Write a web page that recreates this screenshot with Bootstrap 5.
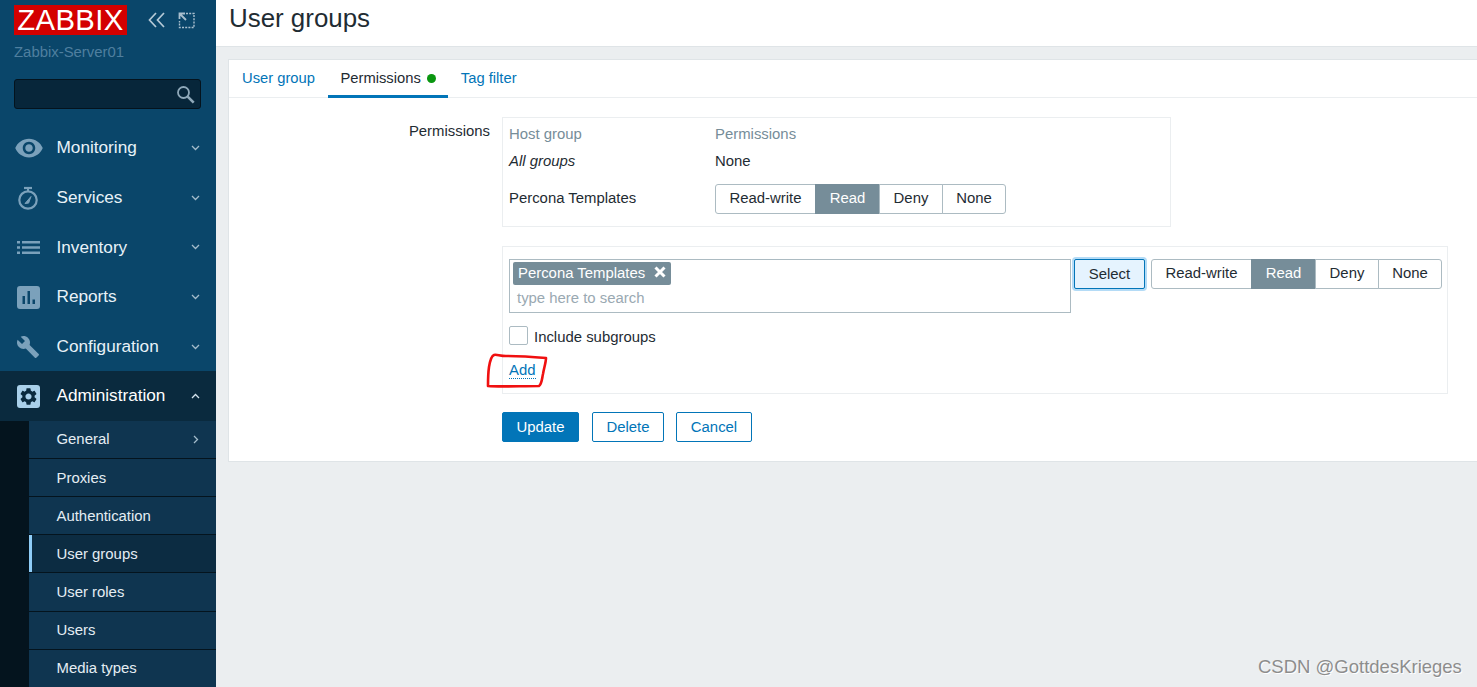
<!doctype html>
<html lang="en">
<head>
<meta charset="utf-8">
<title>User groups</title>
<link href="https://cdn.jsdelivr.net/npm/bootstrap@5.3.0/dist/css/bootstrap.min.css" rel="stylesheet">
<style>
html,body{height:100%;overflow:hidden}
body{font-family:"Liberation Sans",Arial,sans-serif;font-size:14.9px;color:#1f2c33;background:#ebeef0}
.shell{height:687px}
.side{width:216px;flex:none;background:#0a466a;overflow:hidden}
.logo-row{padding:5px 0 0 14px;height:41px}
.logo-mark{width:113px;height:30px;background:#d40000;color:#fff;font-size:29.3px;line-height:30px;text-align:center;letter-spacing:.4px}
.logo-tools{margin-left:21px;margin-top:7px;gap:13px}
.srv{padding-left:14px;color:#4f7f9f;font-size:14.9px;line-height:17px;margin-top:3px}
.search-box{margin:18px 15px 0 14px;height:30px;background:#07263a;border:1px solid #04131d;border-radius:3px;padding:0 5px 0 0}
.menu-top{margin-top:14.5px}
.menu-link{height:49.6px;padding:0 16px 0 14px;color:#e8f2f8;font-size:17.2px}
.menu-link:hover,.menu-link:focus{color:#e8f2f8}
.menu-ico{width:28px;margin-right:14.5px;flex:none;text-align:center;line-height:0}
.menu-open{background:#0a2a3e;color:#fff}
.menu-open:hover{color:#fff}
.sub-wrap{background:#04141e;padding-left:29px}
.sub-link{height:38.1px;padding:0 17px 0 27.5px;background:#0f3550;color:#e4edf3;font-size:14.9px;border-bottom:1px solid #04141e}
.sub-link:hover,.sub-link:focus{color:#e4edf3}
.sub-on{background:#0c2c42;box-shadow:inset 3px 0 0 #8fcdf7}
.page-head{height:47px;background:#fff;border-bottom:1px solid #dfe4e7;padding:0 0 0 13px}
.page-title{font-size:25.9px;font-weight:400;line-height:37px;color:#1f2c33;margin:0}
.panel{margin:12px 0 0 12px;height:403px;background:#fff;border:1px solid #dfe4e7;border-right:0;border-radius:0}
.tabs-row{height:38px;border-bottom:1px solid #ebeef0;padding-left:.5px}
.tab-item{height:38px;padding:0 12.5px;color:#0275b8;font-size:14.75px;line-height:36px;white-space:nowrap}
.tab-item:hover{color:#0275b8}
.tab-on{color:#1f2c33;border-bottom:3px solid #0275b8;margin-left:.5px}
.tab-on:hover{color:#1f2c33}
.dot-ok{display:inline-block;width:9px;height:9px;border-radius:50%;background:#0a9610;margin-left:6px}
.form-area{padding:19px 0 0 0}
.lab{width:261px;flex:none;text-align:right;padding-top:6px;line-height:17px}
.fields{margin-left:12px;width:1000px}
.box-a{width:669px;height:110px;border:1px solid #ebeef0;padding:8px 6px 0}
.ph{color:#768d99;line-height:17px}
.col-a{width:206px;flex:none}
.row-b{margin-top:10px;height:17px;line-height:17px}
.row-c{margin-top:14px;height:30px}
.row-name{padding-bottom:2px}
.seg{height:30px}
.seg-b{height:30px;padding:0 0 1px;font-size:14.9px;line-height:25px;background:#fff;color:#1f2c33;border:1px solid #acbbc2;--bs-btn-border-radius:3px;--bs-btn-hover-bg:#fff;--bs-btn-hover-color:#1f2c33}
.seg-rw{width:101px}.seg-r{width:65px;background:#768d99;color:#fff;border-color:#768d99}.seg-d{width:64px}.seg-n{width:64px}
.box-b{width:946px;height:148px;margin-top:19px;border:1px solid #ebeef0;padding:12px 3px 0 6px}
.msel{width:562px;height:54px;border:1px solid #acbbc2;padding:2px 3px;flex:none}
.chip{width:158px;height:23px;background:#768d99;color:#fff;border-radius:2px;padding:0 5px 2px;line-height:18px}
.chip-x{margin:-1px 0 1px}
.typing{color:#9aa9b2;padding:5px 0 0 4px;line-height:17px}
.sel-btn{width:71px;height:30px;margin-left:3px;padding:0;font-size:14.9px;background:#e5f3fe;color:#1f2c33;border:1px solid #0275b8;border-radius:2px;box-shadow:0 0 0 2px #b4dbf6;--bs-btn-hover-bg:#e5f3fe;line-height:28px}
.sb-gap{margin-left:6px}
.incl{margin-top:13px;height:19px}
.incl-text{padding-top:3px}
.tick{width:19px;height:19px;border:1px solid #acbbc2;border-radius:2px;margin-right:6px;background:#fff}
.add-link{display:inline-block;margin-top:18px;color:#0275b8;line-height:15px;text-decoration:none;border-bottom:1px dotted #0275b8}
.add-link:hover{color:#0275b8}
.act{margin-top:18px;height:30px}
.act-b{height:30px;padding:0;font-size:14.9px;line-height:28px;border-radius:2px;border:1px solid #0275b8;background:#fff;color:#0275b8;--bs-btn-hover-bg:#fff;--bs-btn-hover-color:#0275b8}
.act-main{width:77px;background:#0275b8;color:#fff;--bs-btn-hover-bg:#0275b8;--bs-btn-hover-color:#fff}
.act-del{width:72px;margin-left:13px}.act-can{width:76px;margin-left:12px}
.ink-mark{position:absolute;left:480px;top:348px}
.wm{position:absolute;left:1258px;top:656px;font-size:18.5px;line-height:22px;color:#8d8d8d;text-shadow:1px 1px 0 #fff;white-space:nowrap}
</style>
</head>
<body>
<div class="d-flex shell">
  <aside class="side">
    <div class="logo-row d-flex">
      <div class="logo-mark">ZABBIX</div>
      <div class="logo-tools d-flex align-items-start">
        <svg width="17" height="16" viewBox="0 0 17 16" fill="none" stroke="#b5c9d6" stroke-width="1.7"><path d="M8 1 1.500 8 8 15M16 1 9.500 8 16 15"/></svg>
        <svg width="17" height="17" viewBox="0 0 17 17" fill="none" stroke="#a9bfce"><path d="M8 1.500h8v14H1.500V9" stroke-dasharray="2 1.200" stroke-width="1.400"/><path d="M1.500 7V1.500H7L1.500 1.500M2 2l6 6" stroke-width="1.800"/></svg>
      </div>
    </div>
    <div class="srv">Zabbix-Server01</div>
    <div class="search-box d-flex align-items-center justify-content-end">
      <svg width="19" height="19" viewBox="0 0 19 19" fill="none" stroke="#8fa9ba"><circle cx="7.500" cy="7.500" r="5.500" stroke-width="1.800"/><path d="m11.700 11.700 6 6" stroke-width="2.600"/></svg>
    </div>
    <nav class="nav flex-column flex-nowrap menu-top">
      <a class="nav-link menu-link d-flex align-items-center" href="#"><span class="menu-ico"><svg width="30" height="30" viewBox="0 0 24 24" fill="#7ba1bb"><path d="M12 4.500C7 4.500 2.730 7.610 1 12c1.730 4.390 6 7.500 11 7.500s9.270-3.110 11-7.500c-1.730-4.390-6-7.500-11-7.500zM12 17c-2.760 0-5-2.240-5-5s2.240-5 5-5 5 2.240 5 5-2.240 5-5 5zm0-8c-1.660 0-3 1.340-3 3s1.340 3 3 3 3-1.340 3-3-1.340-3-3-3z"/></svg></span>Monitoring<svg class="ms-auto" width="9" height="6" viewBox="0 0 9 6" fill="none" stroke="#a4bccb" stroke-width="1.300"><path d="m1 1 3.500 3.500L8 1"/></svg></a>
      <a class="nav-link menu-link d-flex align-items-center" href="#"><span class="menu-ico"><svg width="22" height="24" viewBox="0 0 22 24" fill="none" stroke="#7ba1bb"><circle cx="11" cy="14" r="8.700" stroke-width="2.200"/><path d="M7 2h8" stroke-width="2.200"/><path d="M11 2v3" stroke-width="2"/><path d="m8 17.500 6-7-2.400 6.600z" fill="#7ba1bb" stroke-width="1"/></svg></span>Services<svg class="ms-auto" width="9" height="6" viewBox="0 0 9 6" fill="none" stroke="#a4bccb" stroke-width="1.300"><path d="m1 1 3.500 3.500L8 1"/></svg></a>
      <a class="nav-link menu-link d-flex align-items-center" href="#"><span class="menu-ico"><svg width="23" height="15" viewBox="0 0 23 15" fill="#7ba1bb"><path d="M0 1h3v2.400H0zM5 1h18v2.400H5zM0 6.300h3v2.400H0zM5 6.300h18v2.400H5zM0 11.600h3V14H0zM5 11.600h18V14H5z"/></svg></span>Inventory<svg class="ms-auto" width="9" height="6" viewBox="0 0 9 6" fill="none" stroke="#a4bccb" stroke-width="1.300"><path d="m1 1 3.500 3.500L8 1"/></svg></a>
      <a class="nav-link menu-link d-flex align-items-center" href="#"><span class="menu-ico"><svg width="23" height="23" viewBox="0 0 23 23" fill="#7ba1bb"><path fill-rule="evenodd" d="M3 0h17a3 3 0 0 1 3 3v17a3 3 0 0 1-3 3H3a3 3 0 0 1-3-3V3a3 3 0 0 1 3-3zm2.500 10v8h2.500v-8zm5-5v13H13V5zm5 8.500V18H18v-4.500z"/></svg></span>Reports<svg class="ms-auto" width="9" height="6" viewBox="0 0 9 6" fill="none" stroke="#a4bccb" stroke-width="1.300"><path d="m1 1 3.500 3.500L8 1"/></svg></a>
      <a class="nav-link menu-link d-flex align-items-center" href="#"><span class="menu-ico"><svg width="24" height="24" viewBox="0 0 24 24" fill="#7ba1bb"><path d="M22.700 19l-9.100-9.100c.9-2.300.4-5-1.500-6.900-2-2-5-2.400-7.400-1.300L9 6 6 9 1.600 4.700C.4 7.100.9 10.100 2.900 12.100c1.900 1.900 4.600 2.400 6.900 1.500l9.100 9.100c.4.4 1 .4 1.400 0l2.300-2.300c.5-.4.5-1.100.1-1.400z"/></svg></span>Configuration<svg class="ms-auto" width="9" height="6" viewBox="0 0 9 6" fill="none" stroke="#a4bccb" stroke-width="1.300"><path d="m1 1 3.500 3.500L8 1"/></svg></a>
      <a class="nav-link menu-link menu-open d-flex align-items-center" href="#"><span class="menu-ico"><svg width="23" height="23" viewBox="0 0 23 23"><rect width="23" height="23" rx="3" fill="#a9d0ea"/><g transform="translate(1.300 1.300) scale(.85)"><path fill="#0a2a3e" d="M19.140 12.940c.04-.3.06-.61.06-.94 0-.32-.02-.64-.07-.94l2.030-1.580a.49.49 0 0 0 .12-.61l-1.920-3.320a.488.488 0 0 0-.59-.22l-2.390.96c-.5-.38-1.030-.7-1.620-.94l-.36-2.540a.484.484 0 0 0-.48-.41h-3.840c-.24 0-.43.17-.47.41l-.36 2.540c-.59.24-1.130.57-1.620.94l-2.390-.96c-.22-.08-.47 0-.59.22L2.740 8.870c-.12.21-.08.47.12.61l2.030 1.580c-.05.3-.09.63-.09.94s.02.64.07.94l-2.030 1.580a.49.49 0 0 0-.12.61l1.920 3.320c.12.22.37.29.59.22l2.390-.96c.5.38 1.030.7 1.620.94l.36 2.540c.05.24.24.41.48.41h3.840c.24 0 .44-.17.47-.41l.36-2.540c.59-.24 1.130-.56 1.620-.94l2.390.96c.22.08.47 0 .59-.22l1.920-3.320c.12-.22.07-.47-.12-.61l-2.010-1.580zM12 15.600c-1.980 0-3.600-1.620-3.600-3.600s1.620-3.600 3.600-3.600 3.600 1.620 3.600 3.600-1.620 3.600-3.600 3.600z"/></g></svg></span>Administration<svg class="ms-auto" width="9" height="6" viewBox="0 0 9 6" fill="none" stroke="#d5e4ee" stroke-width="1.300"><path d="m1 5 3.500-3.500L8 5"/></svg></a>
      <div class="sub-wrap d-flex flex-column">
        <a class="nav-link sub-link d-flex align-items-center justify-content-between" href="#">General<svg width="6" height="9" viewBox="0 0 6 9" fill="none" stroke="#a4bccb" stroke-width="1.300"><path d="m1 1 3.500 3.500L1 8"/></svg></a>
        <a class="nav-link sub-link d-flex align-items-center" href="#">Proxies</a>
        <a class="nav-link sub-link d-flex align-items-center" href="#">Authentication</a>
        <a class="nav-link sub-link sub-on d-flex align-items-center" href="#">User groups</a>
        <a class="nav-link sub-link d-flex align-items-center" href="#">User roles</a>
        <a class="nav-link sub-link d-flex align-items-center" href="#">Users</a>
        <a class="nav-link sub-link d-flex align-items-center" href="#">Media types</a>
      </div>
    </nav>
  </aside>
  <main class="flex-grow-1">
    <header class="page-head"><h1 class="page-title">User groups</h1></header>
    <section class="panel">
      <div class="tabs-row d-flex">
        <a class="tab-item text-decoration-none" href="#">User group</a>
        <a class="tab-item tab-on text-decoration-none" href="#">Permissions<span class="dot-ok"></span></a>
        <a class="tab-item text-decoration-none" href="#">Tag filter</a>
      </div>
      <div class="form-area d-flex">
        <div class="lab">Permissions</div>
        <div class="fields">
          <div class="box-a">
            <div class="d-flex ph"><div class="col-a">Host group</div><div>Permissions</div></div>
            <div class="d-flex row-b"><div class="col-a fst-italic">All groups</div><div>None</div></div>
            <div class="d-flex align-items-center row-c"><div class="col-a row-name">Percona Templates</div>
              <div class="btn-group seg" role="group"><button type="button" class="btn seg-b seg-rw">Read-write</button><button type="button" class="btn seg-b seg-r">Read</button><button type="button" class="btn seg-b seg-d">Deny</button><button type="button" class="btn seg-b seg-n">None</button></div>
            </div>
          </div>
          <div class="box-b">
            <div class="d-flex align-items-start">
              <div class="msel">
                <div class="chip d-flex align-items-center justify-content-between">Percona Templates<svg class="chip-x" width="12" height="12" viewBox="0 0 12 12" fill="none" stroke="#fff" stroke-width="3"><path d="m1.500 1.500 9 9M10.500 1.500l-9 9"/></svg></div>
                <div class="typing">type here to search</div>
              </div>
              <button type="button" class="btn sel-btn">Select</button>
              <div class="btn-group seg sb-gap" role="group"><button type="button" class="btn seg-b seg-rw">Read-write</button><button type="button" class="btn seg-b seg-r">Read</button><button type="button" class="btn seg-b seg-d">Deny</button><button type="button" class="btn seg-b seg-n">None</button></div>
            </div>
            <div class="incl d-flex align-items-center"><span class="tick"></span><span class="incl-text">Include subgroups</span></div>
            <a class="add-link" href="#">Add</a>
          </div>
          <div class="act d-flex">
            <button type="button" class="btn act-b act-main">Update</button>
            <button type="button" class="btn act-b act-del">Delete</button>
            <button type="button" class="btn act-b act-can">Cancel</button>
          </div>
        </div>
      </div>
    </section>
  </main>
</div>
<svg class="ink-mark" width="72" height="44" viewBox="0 0 72 44" fill="none" stroke="#f01010" stroke-width="2.600" stroke-linecap="round" stroke-linejoin="round"><path d="M14 7C11 8 10 13 9 19 8 26 8 32 8 38 20 39 40 38 59 38 62 36 62 30 63 26 64 20 66 14 66 10 54 9 40 8 26 8 20 8 16 6 14 7Z"/></svg>
<div class="wm">CSDN @GottdesKrieges</div>
</body>
</html>
